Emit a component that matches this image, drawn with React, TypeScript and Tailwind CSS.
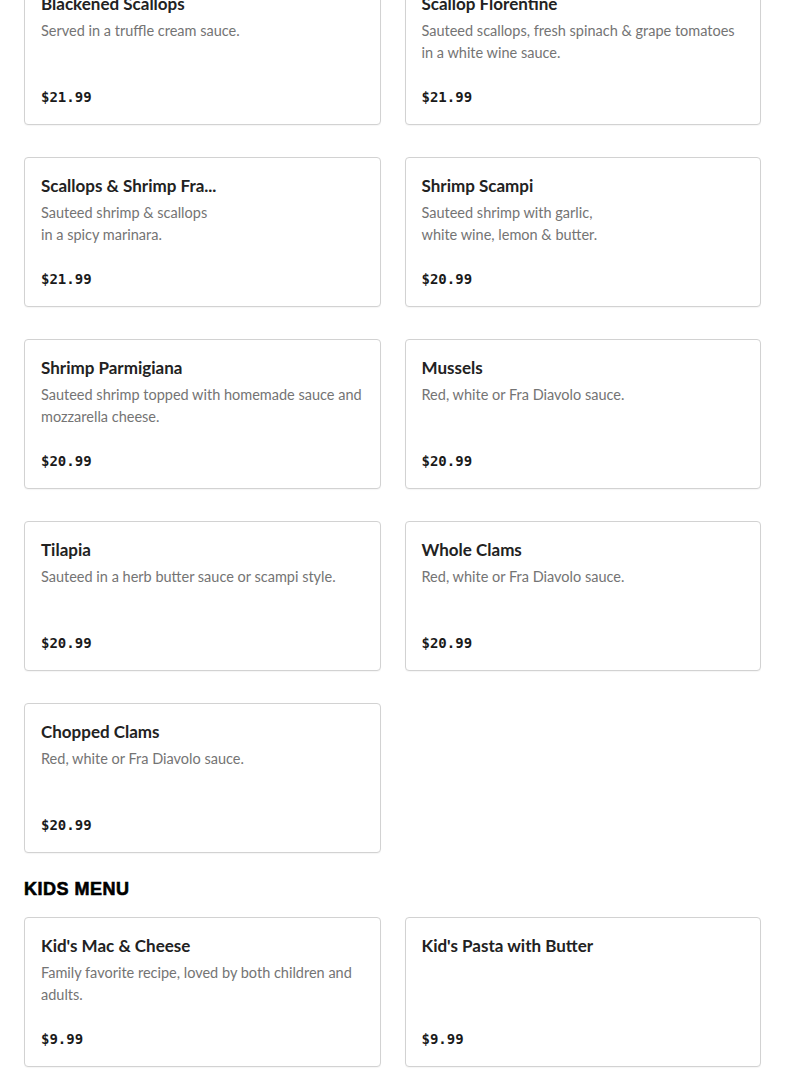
import React from "react";

type Item = { name: string; desc: string; price: string };

const seafood: Item[] = [
  { name: "Blackened Scallops", desc: "Served in a truffle cream sauce.", price: "$21.99" },
  {
    name: "Scallop Florentine",
    desc: "Sauteed scallops, fresh spinach & grape tomatoes in a white wine sauce.",
    price: "$21.99",
  },
  { name: "Scallops & Shrimp Fra...", desc: "Sauteed shrimp & scallops\nin a spicy marinara.", price: "$21.99" },
  { name: "Shrimp Scampi", desc: "Sauteed shrimp with garlic,\nwhite wine, lemon & butter.", price: "$20.99" },
  {
    name: "Shrimp Parmigiana",
    desc: "Sauteed shrimp topped with homemade sauce and mozzarella cheese.",
    price: "$20.99",
  },
  { name: "Mussels", desc: "Red, white or Fra Diavolo sauce.", price: "$20.99" },
  { name: "Tilapia", desc: "Sauteed in a herb butter sauce or scampi style.", price: "$20.99" },
  { name: "Whole Clams", desc: "Red, white or Fra Diavolo sauce.", price: "$20.99" },
  { name: "Chopped Clams", desc: "Red, white or Fra Diavolo sauce.", price: "$20.99" },
];

const kids: Item[] = [
  { name: "Kid's Mac & Cheese", desc: "Family favorite recipe, loved by both children and adults.", price: "$9.99" },
  { name: "Kid's Pasta with Butter", desc: "", price: "$9.99" },
];

function Card({ item }: { item: Item }) {
  return (
    <div className="border border-[#d2d2d2] rounded-[4px] bg-white px-4 pt-4 pb-[15px] shadow-[0_1px_1px_rgba(0,0,0,0.04)]">
      <h3 className="text-[17px] leading-6 font-bold text-[#222] [font-family:Lato,sans-serif]">{item.name}</h3>
      <p className="mt-[4px] h-[44px] text-[14.5px] leading-[22px] text-[#747474] whitespace-pre-line [font-family:Lato,sans-serif]">
        {item.desc}
      </p>
      <p className="mt-[21px] text-sm leading-6 font-bold text-[#1a1a1a] [font-family:'DejaVu_Sans_Mono',monospace]">
        {item.price}
      </p>
    </div>
  );
}

export default function App() {
  return (
    <div className="bg-white min-h-screen px-6 pb-10">
      <div className="-mt-[25px] grid grid-cols-2 gap-x-6 gap-y-8">
        {seafood.map((it) => (
          <Card key={it.name} item={it} />
        ))}
      </div>
      <h2 className="mt-[22px] mb-[14px] text-lg leading-7 font-black tracking-[0.5px] text-black [-webkit-text-stroke:0.6px_black] [font-family:'Liberation_Sans',Arial,sans-serif]">
        KIDS MENU
      </h2>
      <div className="grid grid-cols-2 gap-x-6 gap-y-8">
        {kids.map((it) => (
          <Card key={it.name} item={it} />
        ))}
      </div>
    </div>
  );
}
